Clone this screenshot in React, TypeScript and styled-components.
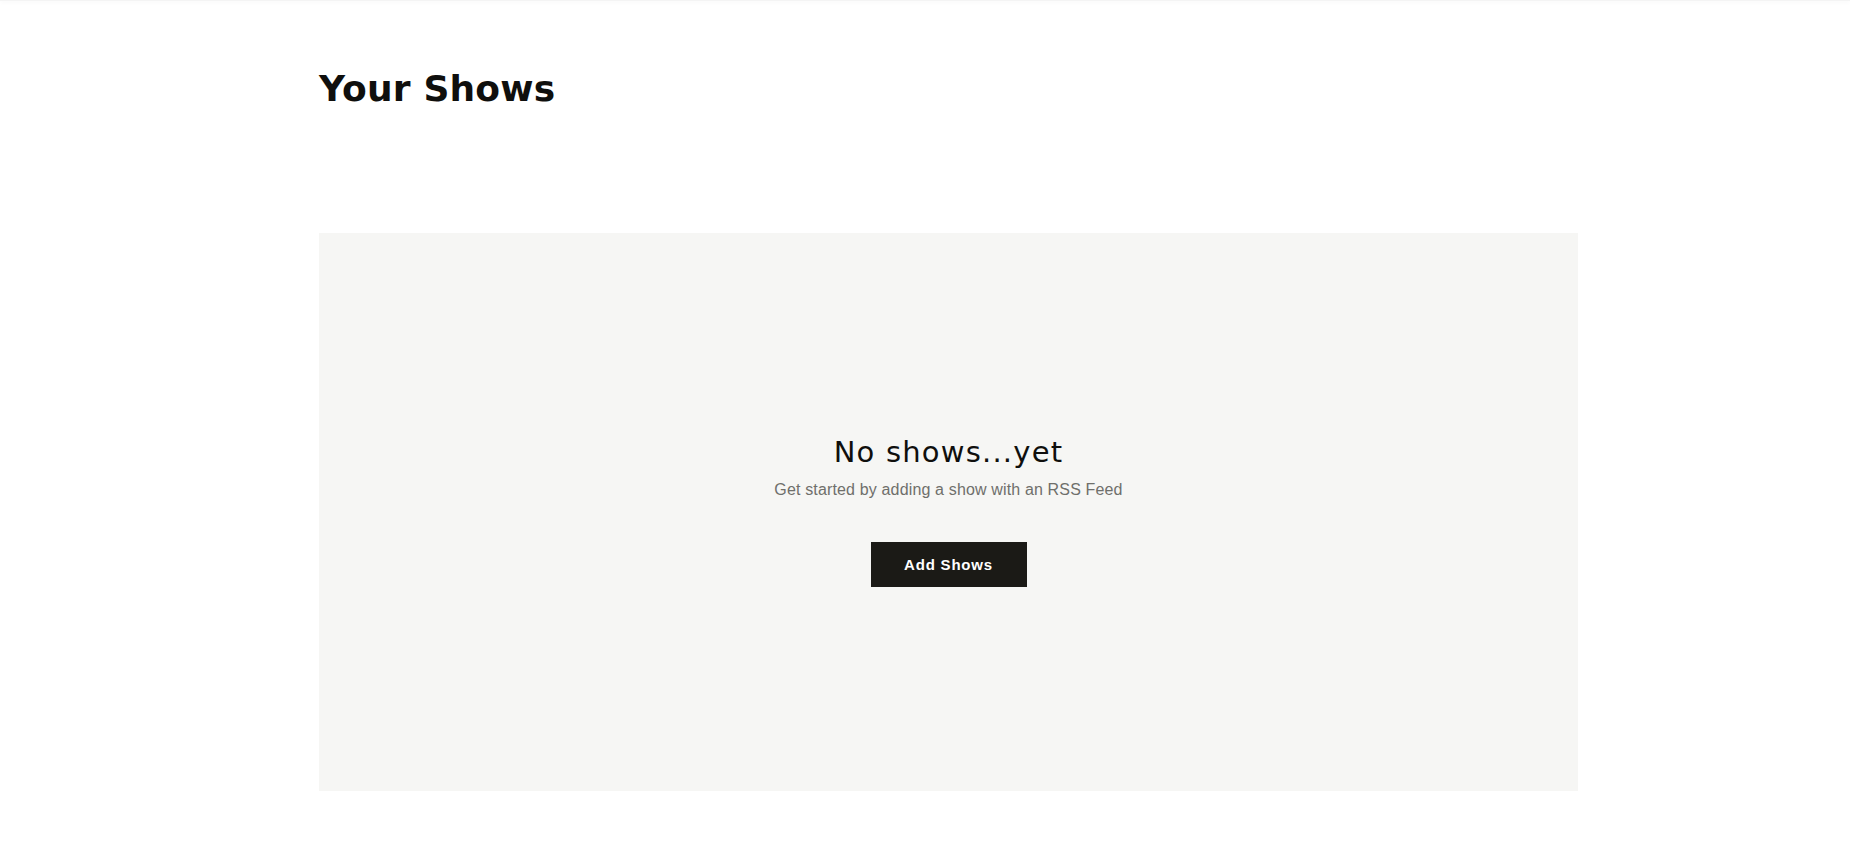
import React from "react";
import styled, { createGlobalStyle } from "styled-components";

const GlobalStyle = createGlobalStyle`
  html, body {
    margin: 0;
    padding: 0;
    background: #ffffff;
  }
  body {
    font-family: "Liberation Sans", Arial, sans-serif;
    color: #111111;
  }
`;

const TopShadow = styled.div`
  height: 1px;
  background: #f4f4f4;
  box-shadow: 0 1px 4px rgba(0, 0, 0, 0.08);
`;

const Main = styled.main`
  width: 1259px;
  margin: 0 0 0 319px;
  padding-top: 66px;
`;

const PageTitle = styled.h1`
  margin: 0;
  font-family: "DejaVu Sans", sans-serif;
  font-weight: 700;
  font-size: 36px;
  line-height: 44px;
  letter-spacing: 0.2px;
  color: #0f0f0d;
`;

const EmptyPanel = styled.section`
  margin-top: 122px;
  height: 558px;
  box-sizing: border-box;
  padding-top: 201px;
  background: #f6f6f4;
  display: flex;
  flex-direction: column;
  align-items: center;
`;

const EmptyTitle = styled.h2`
  margin: 0;
  font-family: "DejaVu Sans", sans-serif;
  font-weight: 400;
  font-size: 29px;
  line-height: 36px;
  letter-spacing: 1.2px;
  color: #0f0f0d;
`;

const EmptyText = styled.p`
  margin: 9px 0 0;
  font-size: 16px;
  line-height: 22px;
  letter-spacing: 0.15px;
  color: #6f6f6b;
`;

const AddButton = styled.button`
  margin-top: 41px;
  width: 156px;
  height: 45px;
  border: none;
  background: #1b1a16;
  color: #ffffff;
  font-family: "Liberation Sans", Arial, sans-serif;
  font-weight: 700;
  font-size: 15px;
  letter-spacing: 0.8px;
  cursor: pointer;
`;

export default function App() {
  return (
    <>
      <GlobalStyle />
      <TopShadow />
      <Main>
        <PageTitle>Your Shows</PageTitle>
        <EmptyPanel>
          <EmptyTitle>No shows...yet</EmptyTitle>
          <EmptyText>Get started by adding a show with an RSS Feed</EmptyText>
          <AddButton>Add Shows</AddButton>
        </EmptyPanel>
      </Main>
    </>
  );
}
